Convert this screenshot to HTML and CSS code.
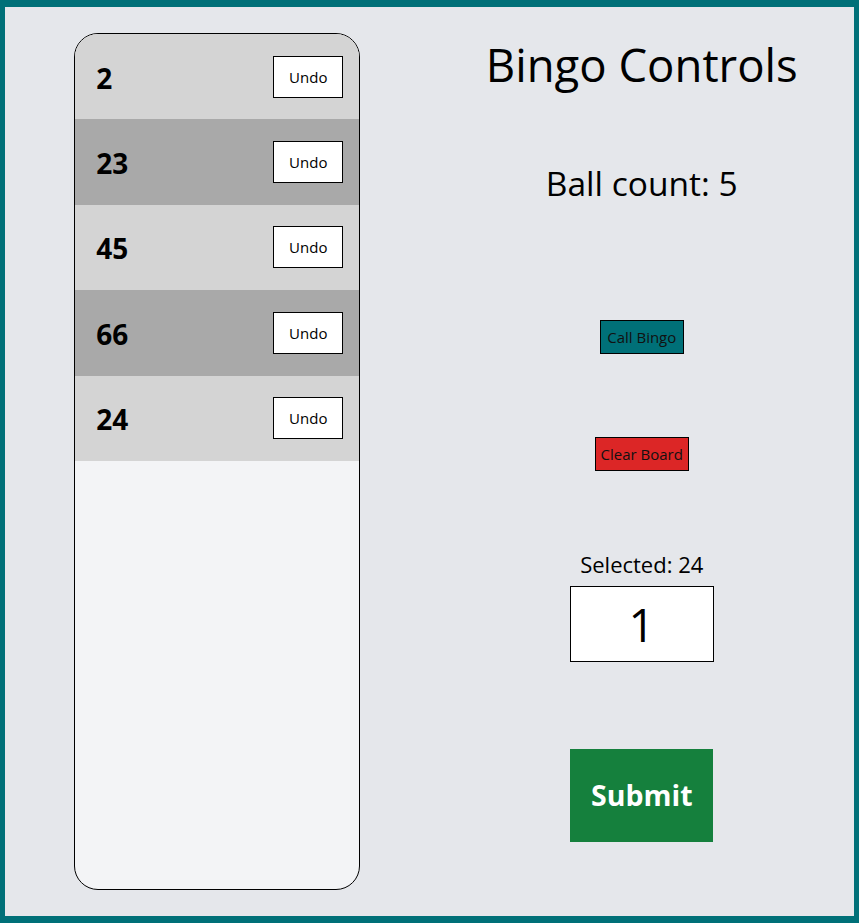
FILE: index.html
```html
<!DOCTYPE html>
<html>
<head>
<meta charset="utf-8">
<link rel="stylesheet" href="styles.css">
</head>
<body>
<div class="frame">
  <div class="left">
    <div class="panel">
      <div class="row light"><span class="num">2</span><button class="undo">Undo</button></div>
      <div class="row dark"><span class="num">23</span><button class="undo">Undo</button></div>
      <div class="row light"><span class="num">45</span><button class="undo">Undo</button></div>
      <div class="row dark"><span class="num">66</span><button class="undo">Undo</button></div>
      <div class="row light"><span class="num">24</span><button class="undo">Undo</button></div>
    </div>
  </div>
  <div class="right">
    <h1 class="title">Bingo Controls</h1>
    <div class="count">Ball count: 5</div>
    <button class="btn call">Call Bingo</button>
    <button class="btn clear">Clear Board</button>
    <div class="selected">Selected: 24</div>
    <div class="input">1</div>
    <button class="submit">Submit</button>
  </div>
</div>
</body>
</html>
```

FILE: styles.css
```css
html, body {
  margin: 0;
  padding: 0;
}
body {
  font-family: "Open Sans", "Noto Sans", sans-serif;
  color: #000;
}
.frame {
  box-sizing: border-box;
  width: 859px;
  height: 923px;
  border-style: solid;
  border-color: #007078;
  border-width: 7px 5px;
  background: #e5e7eb;
  display: grid;
  grid-template-columns: 1fr 1fr;
}
.left {
  display: flex;
  justify-content: center;
  padding-top: 26px;
}
.panel {
  box-sizing: border-box;
  width: 286px;
  height: 857px;
  border: 1px solid #000;
  border-radius: 24px;
  background: #f3f4f6;
  overflow: hidden;
  display: flex;
  flex-direction: column;
}
.row {
  height: 85.4px;
  flex: none;
  display: flex;
  align-items: center;
  justify-content: space-between;
  padding: 0 16px 0 21px;
}
.row.light { background: #d4d4d4; }
.row.dark { background: #a9a9a9; }
.num {
  font-weight: 700;
  font-size: 28px;
  line-height: 1;
  padding-top: 2px;
}
.undo {
  box-sizing: border-box;
  width: 70px;
  height: 42px;
  background: #fff;
  border: 1px solid #000;
  font-family: inherit;
  font-size: 15px;
  color: #000;
  padding: 0;
}
.right {
  display: flex;
  flex-direction: column;
  align-items: center;
}
.title {
  margin: 35px 0 0;
  font-weight: 400;
  font-size: 45.5px;
  line-height: 45.5px;
}
.count {
  margin-top: 79px;
  font-size: 33.5px;
  line-height: 33.5px;
}
.btn {
  box-sizing: border-box;
  height: 34px;
  border: 1px solid #000;
  font-family: inherit;
  font-size: 15px;
  color: #111;
  padding: 0;
}
.call {
  width: 84px;
  margin-top: 119.5px;
  background: #007078;
}
.clear {
  width: 94px;
  margin-top: 83px;
  background: #dc2626;
}
.selected {
  margin-top: 82.5px;
  font-size: 22px;
  line-height: 22px;
}
.input {
  box-sizing: border-box;
  margin-top: 10.5px;
  width: 144px;
  height: 76px;
  background: #fff;
  border: 1px solid #000;
  font-size: 46px;
  display: flex;
  align-items: center;
  justify-content: center;
  line-height: 1;
}
.submit {
  box-sizing: border-box;
  margin-top: 87px;
  width: 143px;
  height: 93px;
  background: #15803d;
  border: none;
  color: #fff;
  font-family: inherit;
  font-weight: 700;
  font-size: 28.5px;
  padding: 0;
}
```
